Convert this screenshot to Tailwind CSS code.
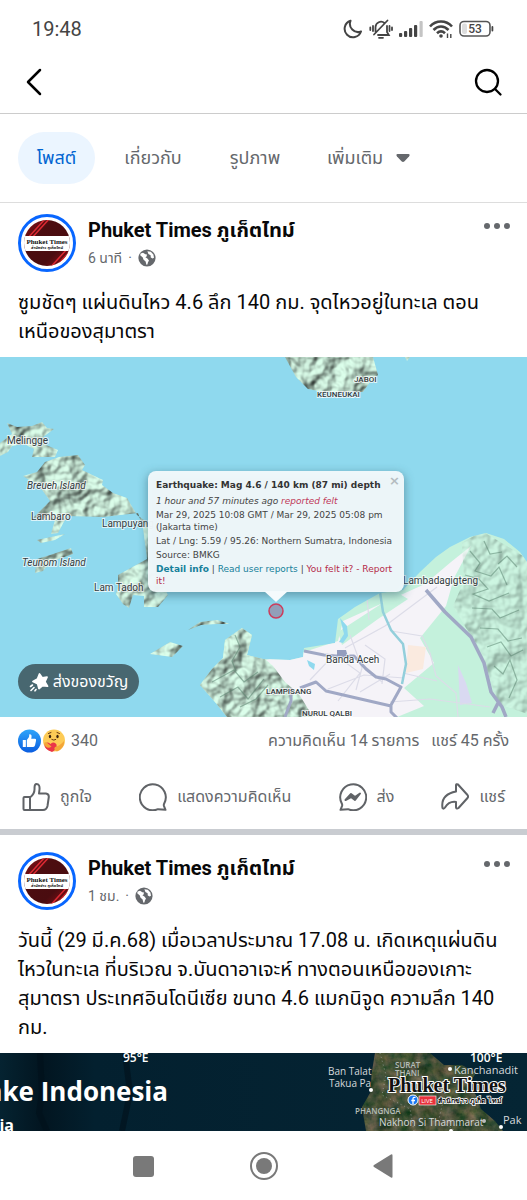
<!DOCTYPE html>
<html lang="th">
<head>
    <meta charset="UTF-8">
    <meta name="viewport" content="width=device-width, initial-scale=1.0">
    <title>Phuket Times ภูเก็ตไทม์</title>
    <script src="https://cdn.jsdelivr.net/npm/@tailwindcss/browser@4"></script>
</head>
<body class="bg-white text-[#080809] font-[Roboto,'Noto_Sans_Thai','Noto_Sans',sans-serif] overflow-x-hidden">

    <!-- Shared gradient and clip, kept rendered so the symbols can use them -->
    <svg class="absolute w-0 h-0">
        <clipPath id="avatarClip"><circle cx="29" cy="29" r="23"/></clipPath>
        <linearGradient id="maroon" x1="0" y1="0" x2="1" y2="1">
            <stop offset="0" stop-color="#b5121b"/>
            <stop offset=".35" stop-color="#4c0d10"/>
            <stop offset=".65" stop-color="#4a0c10"/>
            <stop offset="1" stop-color="#b5121b"/>
        </linearGradient>
    </svg>

    <!-- Shared symbols -->
    <svg class="hidden">
        <symbol id="globe" viewBox="0 0 18 18">
            <circle cx="9" cy="9" r="8.6" fill="#65686c"/>
            <path d="M2.600 4.600 5 3.800 7.400 5.200 9 5.600 8.600 7.400 7.400 8.200 9.400 9.600 11 11.400 10 13.200 9.400 15.600 8.400 15.800 7.600 12.400 5.400 10.600 4.800 8.400 2.200 6.200Z" fill="#fff"/>
            <path d="M9.400 2.200 12.800 2.800 15.400 5.600 16 8.800 14.600 9.400 12.800 8.400 12.600 6.200 10.400 5Z" fill="#fff"/>
        </symbol>
        <symbol id="avatar" viewBox="0 0 58 58">
            <circle cx="29" cy="29" r="27.5" fill="#fff" stroke="#0866ff" stroke-width="3"/>
            <g clip-path="url(#avatarClip)">
                <rect width="58" height="58" fill="url(#maroon)"/>
                <path d="M8 26 28 4M12 26 32 4M30 56 50 34M35 56 55 34" stroke="#dc2a33" stroke-width="1.5"/>
                <rect x="5" y="22" width="48" height="15" fill="#fff"/>
            </g>
            <text x="29" y="30" text-anchor="middle" font-family="Liberation Serif, serif" font-weight="700" font-size="7" fill="#111">Phuket Times</text>
            <text x="29" y="35" text-anchor="middle" font-weight="700" font-size="4" fill="#111">สำนักข่าว ภูเก็ตไทม์</text>
        </symbol>
        <symbol id="dots" viewBox="0 0 28 8">
            <circle cx="4" cy="4" r="3" fill="#65686c"/>
            <circle cx="14" cy="4" r="3" fill="#65686c"/>
            <circle cx="24" cy="4" r="3" fill="#65686c"/>
        </symbol>
    </svg>

    <!-- Status bar -->
    <div class="h-14 pt-0.5 pl-8 pr-8 flex items-center justify-between text-[#444]">
        <span class="text-xl">19:48</span>
        <div class="flex items-center gap-1.5">
            <svg class="w-5 h-5" viewBox="0 0 20 20" fill="none" stroke="#444" stroke-width="2" stroke-linejoin="round"><path d="M7.500 1.800A8.400 8.400 0 1 0 18 12.500 8.200 8.200 0 0 1 7.500 1.800Z"/></svg>
            <svg class="w-6 h-5" viewBox="0 0 24 20" fill="none" stroke="#444" stroke-width="1.8" stroke-linecap="round"><path d="M6.5 12.500V8a5.500 5.500 0 0 1 9-4M18 7v6l1.800 3H9M5 15.500 18.500 1.500M10 18.800h4M4 7v5M1.300 8.500v2.500M20.500 7v5M23 8.500v2.500"/></svg>
            <svg class="w-6 h-5" viewBox="0 0 24 20" fill="#444"><rect y="14" width="3.200" height="4" rx="1"/><rect x="5" y="12" width="3.200" height="6" rx="1"/><rect x="10" y="9" width="3.200" height="9" rx="1"/><rect x="15" y="6" width="3.200" height="12" rx="1"/><rect x="20.500" y="2" width="3.200" height="16" rx="1" fill="#c4c4c4"/></svg>
            <svg class="w-6 h-5" viewBox="0 0 24 20" fill="none" stroke="#444" stroke-width="2.600"><path d="M1 7.500C7 .8 17 .8 23 7.500M4.500 11c4.500-4.600 10.500-4.600 15 0M8 14.300c2.500-2.400 5.500-2.400 8 0"/><circle cx="12" cy="17" r="1.800" fill="#444" stroke="none"/><path d="M18.500 19v-4.500M21.800 15v4" stroke-width="1.400"/></svg>
            <svg class="w-9 h-5" viewBox="0 0 36 20"><rect x="1" y="2.500" width="30" height="14.500" rx="4" fill="none" stroke="#555" stroke-width="1.600"/><rect x="3" y="4.500" width="5" height="10.500" rx="2" fill="#ddd"/><rect x="32.500" y="7" width="1.800" height="5.500" rx="1" fill="#444"/><text x="16" y="14" text-anchor="middle" font-family="Roboto" font-weight="500" font-size="12" fill="#444">53</text></svg>
        </div>
    </div>

    <!-- Top bar -->
    <header class="h-[58px] px-6 pb-1.5 flex items-center justify-between border-b border-[#cccccc]">
        <button aria-label="ย้อนกลับ"><svg class="w-6 h-8" viewBox="0 0 24 32" fill="none" stroke="#000" stroke-width="2.500" stroke-linecap="round" stroke-linejoin="round"><path d="M16 4 4 16l12 12"/></svg></button>
        <button aria-label="ค้นหา"><svg class="w-8 h-8" viewBox="0 0 32 32" fill="none" stroke="#000" stroke-width="2.300" stroke-linecap="round"><circle cx="16" cy="15" r="11"/><path d="m24 23 5.500 5.500"/></svg></button>
    </header>

    <!-- Tabs -->
    <nav class="h-[89px] pl-[18px] flex items-center border-b border-[#dddddd] text-lg text-[#65686c]">
        <button class="h-[52px] w-[77px] rounded-full bg-[#ebf5ff] text-[#0064d1]">โพสต์</button>
        <button class="ml-3 w-[92px]">เกี่ยวกับ</button>
        <button class="ml-3 w-[88px]">รูปภาพ</button>
        <button class="ml-7 flex items-center gap-3">เพิ่มเติม <svg class="w-4 h-3" viewBox="0 0 16 12"><path d="M2.500 2h11q2 .5.500 2.500L9.500 9.300q-1.500 1.200-3 0L2 4.500Q.5 2.500 2.500 2Z" fill="#65686c"/></svg></button>
    </nav>

    <!-- Post 1 -->
    <article>
        <div class="px-[18px] pt-[11px] flex">
            <svg class="w-[58px] h-[58px]"><use href="#avatar"/></svg>
            <div class="ml-3 flex-1">
                <h2 class="text-xl leading-8 font-bold">Phuket Times ภูเก็ตไทม์</h2>
                <p class="flex items-center gap-1 text-sm leading-6 text-[#65686c]">6 นาที <span class="px-0.5">·</span> <svg class="w-[18px] h-[18px]"><use href="#globe"/></svg></p>
            </div>
            <button class="self-start pt-2 -mr-0.5" aria-label="ตัวเลือก"><svg class="w-7 h-2"><use href="#dots"/></svg></button>
        </div>
        <p class="px-[18px] pt-4 pb-[11px] text-xl leading-[29px] whitespace-nowrap">ซูมชัดๆ แผ่นดินไหว 4.6 ลึก 140 กม. จุดไหวอยู่ในทะเล ตอน<br>เหนือของสุมาตรา</p>

        <!-- Map -->
        <div class="relative overflow-hidden">
            <svg class="block w-full h-auto" viewBox="0 0 527 360">
                <defs>
                    <filter id="relief" x="0" y="0" width="100%" height="100%" color-interpolation-filters="sRGB">
                        <feTurbulence type="fractalNoise" baseFrequency=".05" numOctaves="3" seed="7" result="n"/>
                        <feDiffuseLighting in="n" surfaceScale="6" diffuseConstant="1.100" lighting-color="#c8e8d6" result="l"><feDistantLight azimuth="225" elevation="58"/></feDiffuseLighting>
                        <feComposite in="l" in2="SourceAlpha" operator="in"/>
                    </filter>
                    <filter id="soft"><feGaussianBlur stdDeviation="5"/></filter>
                    <clipPath id="main"><path id="coast" d="M227 360 215 345 200 328 212 312 223 301 225 283 242 271 252 278 247 298 263 302 290 303 303 300 304 291 335 286 338 262 355 250 380 236 403 233 420 215 436 200 450 190 470 180 486 176 504 182 520 195 527 205V360Z"/></clipPath>
                </defs>
                <rect width="527" height="360" fill="#8fd9ee"/>

                <!-- Islands -->
                <g filter="url(#relief)">
                    <path d="m7 66 10 4 15-1 10-4 5 6 7 1-11 8 3 8 12 5-3 7-23 0 2-8-10-5-12 2-4 6-8 4V86l12-9Z"/>
                    <path d="m45 105 14-5 19-2 7 10-3 5 21 10-1 5 11 8 14 5 10 17 11 8v34l20 38-10 12-14 0 0-11-11-1-4 13-6-4-7-10 2-7 0-12 29-16-4-31-5-15-35 4-36-1-9 17-7 1 4-14-22-2 17-17-10-14-17-11 14-4Z"/>
                    <path d="m37 183 28-6-10 6-14 3ZM35 216l2-14 13-4 21-7 2 6-23 8-7 9Z"/>
                    <path d="m188 273 12-8 17-2 13 4-13 0-16 1ZM150 297l20-12 13 4-11 11Z"/>
                    <path d="M285 0l11 20 12 12 15 3 40 0 7-10 8-7-5-18ZM405 0h5l-3 4Z"/>
                </g>

                <!-- Mainland -->
                <use href="#coast" fill="#c4f1dc"/>
                <g clip-path="url(#main)">
                    <path d="m265 303 39-8 34-11 5-20 82-37 26-22 20-16-17 32-8 28-26 32 14 25-30 25 20 18-44 18-80-7-30-37Z" fill="#f5f3f8"/>
                    <path d="m338 275 60-39 10 6-30 20-36 26Z" fill="#c4f1dc"/>
                    <path d="m408 288 18 2-3 22-17 4Z" fill="#faeadf"/>
                    <path d="m458 308 8 18 6 20-12 2Z" fill="#d9d9f1"/>
                    <path d="M195 268h60l0 25 18 16 12 16 14 12 14 23H215l-20-30Z" filter="url(#relief)"/>
                    <path d="m462 186 20-12 46 28v155l-30-10-18-55-14-21-13-22 11-25Z" filter="url(#relief)" opacity=".4"/>
                    <g fill="none" stroke="#55806c" stroke-width="1.200" opacity=".5">
                        <path d="m470 194 10 12-5 8 16 5 8-9 8 18M465 218l14 4 9 10-15 5 16 7 20-8M472 251l20 1 8 9 19-8M480 271l18 1 10 12 14-3M487 290l14-5 10 14 12-6M494 309l9 8 7-14 7 20-8 18M498 207l9-8 10 11M484 184l6 13 12-2"/>
                        <path d="m235 278 5 12-8 14 4 10M212 325l22-12 10 12 14-10M220 340l18-10 10 12 16-20M240 350l16-8 12-14"/>
                    </g>
                    <g fill="none" stroke="#dcdce8" stroke-width="1.200">
                        <path d="m367 241 2 22M345 291l40-22 52-39M310 323l18-19 26-5 28 26M350 278l12 33-6 22M338 300l22 16-22 28M391 274l31 5 8 17 6 23 20 17 2 24M365 288l20 14-3 25M390 317l-30 18M403 316l34 8M328 332l36-14 40 3M390 345l40-3 60 8"/>
                    </g>
                    <path d="m380 235 3 20 8 18 12 14 3 20-4 20" fill="none" stroke="#93cfdb" stroke-width="2.500"/>
                    <g fill="none" stroke="#a0a8c5" stroke-width="3" stroke-linejoin="round">
                        <path d="m304 294 20 4 12 1 18 0 12 13 10 8 10 2 15 8-10 18v7l8 8M300 331l16-6 10 9 65 15M291 331l0 13-6 16"/>
                        <path d="m426 233 19 22 26 25 13 26 7 29 11 15 4 10M499 344l-6 12" stroke-width="3.500"/>
                    </g>
                    <path d="m337 293 9 0 2 7-11 1Z" fill="#949dbe"/>
                </g>
                <path d="m340 261 7 8 1 10-5 7-4-1 5-8ZM307 303l8 4-1 6-5-4Z" fill="#8fd9ee"/>

                <!-- Place names -->
                <g font-family="Roboto, sans-serif" font-size="10" fill="#333b40" stroke="#fff" stroke-opacity=".7" stroke-width="2" paint-order="stroke">
                    <text x="7" y="87">Melingge</text>
                    <text x="27" y="132" font-style="italic">Breueh Island</text>
                    <text x="31" y="163">Lambaro</text>
                    <text x="102" y="170">Lampuyang</text>
                    <text x="22" y="209" font-style="italic">Teunom Island</text>
                    <text x="94" y="234">Lam Tadoh</text>
                    <text x="403" y="227">Lambadagigteng</text>
                    <text x="326" y="306">Banda Aceh</text>
                    <g font-size="8" font-weight="500">
                        <text x="354" y="25">JABOI</text>
                        <text x="317" y="40">KEUNEUKAI</text>
                        <text x="266" y="337">LAMPISANG</text>
                        <text x="302" y="359">NURUL QALBI</text>
                    </g>
                </g>

                <!-- Epicentre -->
                <rect x="147" y="116" width="258" height="123" rx="8" fill="#35606e" opacity=".5" filter="url(#soft)"/>
                <path d="m264 234 12 11 12-11Z" fill="#f5fafc"/>
                <circle cx="276" cy="254" r="7" fill="#929fb9" stroke="#cc3d5c" stroke-width="1.500"/>
            </svg>

            <div class="absolute left-[148px] top-[114px] w-[256px] h-[121px] rounded-lg bg-[#f3fafc]/95 px-2 pt-2 font-['DejaVu_Sans',sans-serif] text-[9px] leading-[12px] text-[#444] whitespace-nowrap">
                <p class="font-bold text-[#333]">Earthquake: Mag 4.6 / 140 km (87 mi) depth</p>
                <p class="mt-1 italic">1 hour and 57 minutes ago <span class="text-[#c0395a]">reported felt</span></p>
                <p class="mt-[2px]">Mar 29, 2025 10:08 GMT / Mar 29, 2025 05:08 pm<br>(Jakarta time)</p>
                <p class="mt-[2px]">Lat / Lng: 5.59 / 95.26: Northern Sumatra, Indonesia</p>
                <p class="mt-[2px]">Source: BMKG</p>
                <p class="mt-[2px]"><a href="#" class="font-bold text-[#16809a]">Detail info</a> | <a href="#" class="text-[#16809a]">Read user reports</a> | <a href="#" class="text-[#b52a48]">You felt it? - Report<br>it!</a></p>
                <button class="absolute right-1 top-1 text-[13px] font-bold text-[#b4bcc0]" aria-label="Close">×</button>
            </div>

            <button class="absolute left-[18px] bottom-[18px] h-[35px] w-[121px] rounded-full bg-[#486770] text-white flex items-center justify-center gap-1 text-base">
                <svg class="w-5 h-5" viewBox="0 0 20 20" fill="#fff" stroke="#fff" stroke-linejoin="round" stroke-linecap="round"><path d="m10.500 2 2.800 4 4.700-.8-2.200 4.600 2.700 4.400-5-.7-3.500 3-1.300-4.700L4 9.500l4.500-2.400Z" stroke-width="1.800"/><path d="m1.500 14.500 2-1.500M2 18.500l3-3M6 18.800l1-1.300" stroke-width="1.600"/></svg>
                ส่งของขวัญ
            </button>
        </div>

        <!-- Reactions -->
        <div class="h-12 px-[18px] flex items-center text-base text-[#65686c]">
            <svg class="w-[23px] h-6" viewBox="0 0 24 24">
                <linearGradient id="like" x2="0" y2="1"><stop stop-color="#2fa5fa"/><stop offset="1" stop-color="#0a5de0"/></linearGradient>
                <circle cx="12" cy="12" r="12" fill="url(#like)"/>
                <path d="M5 11h3.200v7.200H5ZM9.200 11l2.300-3.300.3-2.700q2.800-.4 2.300 3.200l-.3 1.500h4q1.500.3 1 2l-1 4.800q-.4 1.700-2 1.700H9.200Z" fill="#fff"/>
            </svg>
            <svg class="ml-[2px] w-[22px] h-6" viewBox="0 0 22 24">
                <circle cx="11" cy="11.500" r="11" fill="#fdcb56"/>
                <path d="M5.500 4.500 8 3.500M14 3.500l2.500 1" stroke="#6b3a10" stroke-linecap="round"/>
                <ellipse cx="7" cy="7.500" rx="1.200" ry="1.800" fill="#3b2210"/><ellipse cx="14.500" cy="7.500" rx="1.200" ry="1.800" fill="#3b2210"/>
                <path d="M8.500 10.300q2.300 1.600 4.600 0" fill="none" stroke="#6b3a10" stroke-width="1"/>
                <path d="M9 23Q1 20 1.500 15.500 3.500 12 7.500 15q3.500-3 6 .5Q14.500 20 9 23Z" fill="#ea3548"/>
                <path d="M1 14q2-2 4.500 1l3 2.500q-3 2.500-6 0ZM21 12q1 7-7 10.500-4-2-2-4.500 5-1 9-6Z" fill="#f4a637"/>
            </svg>
            <span class="ml-1.5 flex-1">340</span>
            <a href="#">ความคิดเห็น 14 รายการ</a>
            <a href="#" class="ml-3">แชร์ 45 ครั้ง</a>
        </div>
        <div class="h-16 px-[22px] flex items-center justify-between text-base text-[#65686c]">
            <button class="flex items-center gap-2.5"><svg class="w-7 h-7" viewBox="0 0 28 28" fill="none" stroke="#606367" stroke-width="2" stroke-linejoin="round"><path d="M1.500 15q0-1 1-1H8v13H2.500q-1 0-1-1ZM8 14.500q5-3.500 4.500-9.500Q12.500 1 14.500 1q3.500 0 3 5.500L17 10.500h7q3 .3 2.800 3.500L25.500 23q-1 4-4.500 4H8"/></svg>ถูกใจ</button>
            <button class="flex items-center gap-2.5"><svg class="w-7 h-7" viewBox="0 0 28 28" fill="none" stroke="#606367" stroke-width="2" stroke-linejoin="round"><path d="M25.200 20.500A13 13 0 1 0 19 26.200l7.500.6-1.500-3.600q-.5-1.300.2-2.700Z"/></svg>แสดงความคิดเห็น</button>
            <button class="flex items-center gap-2.5"><svg class="w-7 h-7" viewBox="0 0 28 28" fill="none" stroke="#606367" stroke-width="2" stroke-linejoin="round"><path d="M2.800 20.500A13 13 0 1 1 9 26.200l-7.500.6L3 23.200q.5-1.300-.2-2.700Z"/><path d="m6.500 17 5.500-6 4 3 5-3.500-5 6.500-4-3Z" fill="#606367"/></svg>ส่ง</button>
            <button class="flex items-center gap-2.5"><svg class="w-7 h-7" viewBox="0 0 28 28" fill="none" stroke="#606367" stroke-width="2" stroke-linejoin="round"><path d="M15 2.500q0-2 2-1L26.500 12q1.200 1.500 0 3L17.500 25q-2 1.500-2.500-.8V19q-7-1-11 5.500-1.500 2-2.500.5Q-.5 11.500 15 8.500Z"/></svg>แชร์</button>
        </div>
    </article>

    <div class="h-1.5 bg-[#c9ccd1]"></div>

    <!-- Post 2 -->
    <article>
        <div class="px-[18px] pt-[17px] flex">
            <svg class="w-[58px] h-[58px]"><use href="#avatar"/></svg>
            <div class="ml-3 flex-1">
                <h2 class="text-xl leading-8 font-bold">Phuket Times ภูเก็ตไทม์</h2>
                <p class="flex items-center gap-1 text-sm leading-6 text-[#65686c]">1 ชม. <span class="px-0.5">·</span> <svg class="w-[18px] h-[18px]"><use href="#globe"/></svg></p>
            </div>
            <button class="self-start pt-2 -mr-0.5" aria-label="ตัวเลือก"><svg class="w-7 h-2"><use href="#dots"/></svg></button>
        </div>
        <p class="px-[18px] pt-4 pb-[11px] text-xl leading-[29px] whitespace-nowrap">วันนี้ (29 มี.ค.68) เมื่อเวลาประมาณ 17.08 น. เกิดเหตุแผ่นดิน<br>ไหวในทะเล ที่บริเวณ จ.บันดาอาเจะห์ ทางตอนเหนือของเกาะ<br>สุมาตรา ประเทศอินโดนีเซีย ขนาด 4.6 แมกนิจูด ความลึก 140<br>กม.</p>
        <svg class="block w-full h-auto" viewBox="0 0 527 78" font-family="Open Sans, sans-serif" fill="#fff">
            <defs>
                <linearGradient id="ocean"><stop stop-color="#052331"/><stop offset=".08" stop-color="#021520"/><stop offset=".18" stop-color="#03202f"/><stop offset="1" stop-color="#052534"/></linearGradient>
                <filter id="ground" x="0" y="0" width="100%" height="100%" color-interpolation-filters="sRGB">
                    <feTurbulence type="fractalNoise" baseFrequency=".09" numOctaves="4" seed="3"/>
                    <feColorMatrix values=".6 0 0 0 -.02  .3 .1 0 0 .12  .3 0 .1 0 .02  0 0 0 0 1"/>
                    <feComposite in2="SourceAlpha" operator="in"/>
                </filter>
            </defs>
            <rect width="527" height="78" fill="url(#ocean)"/>
            <path d="m40 0 2 40-3 20 8 18M125 0l5 40-8 38" stroke="#01101a" stroke-width="6" fill="none" opacity=".6"/>
            <path d="M375 0l-3 18-2 22-8 14 4 24H503l-8-10-14-12-5-14-8-10 8-12-14-8-18 0-14-12Z" filter="url(#ground)"/>
            <path d="m380 0 6 22-4 20 28 14 4 22M445 40l-6 26 16 12" stroke="#aaa" stroke-dasharray="1 3" fill="none" opacity=".7"/>
            <text x="123" y="9" font-size="12" font-weight="600">95°E</text>
            <text x="470" y="9" font-size="12" font-weight="600">100°E</text>
            <text x="168" y="48" text-anchor="end" font-size="26" font-weight="700">ake Indonesia</text>
            <text x="14" y="78" text-anchor="end" font-size="16" font-weight="700">ia</text>
            <g font-size="10" fill="#d5d9dc">
                <text x="328" y="22">Ban Talat</text>
                <text x="329" y="34">Takua Pa</text>
                <text x="454" y="21" font-size="11">Kanchanadit</text>
                <text x="379" y="73">Nakhon Si Thammarat</text>
                <text x="503" y="71" font-size="11">Pak</text>
                <g font-size="8" font-weight="600" fill="#b4bcb8">
                    <text x="395" y="15">SURAT</text>
                    <text x="395" y="23">THANI</text>
                    <text x="355" y="61">PHANGNGA</text>
                </g>
            </g>
            <circle cx="371" cy="37" r="2"/><circle cx="450" cy="16" r="2"/><circle cx="501" cy="74" r="2"/><circle cx="451" cy="78" r="2"/><circle cx="484" cy="68" r="2" fill="#bbb"/>
            <text x="388" y="39" font-family="Liberation Serif, serif" font-weight="700" font-size="20" fill="#111" stroke="#fff" stroke-width="2" paint-order="stroke">Phuket Times</text>
            <circle cx="413" cy="47" r="5" fill="#1877f2" stroke="#fff"/>
            <path d="M415.500 44.500q-2.500-.8-2.500 1.500v5M411.300 47.500h3.700" stroke="#fff" stroke-width="1.300" fill="none"/>
            <rect x="419" y="43" width="17" height="9" fill="#e8323c" stroke="#fff" stroke-width=".6"/>
            <text x="427" y="50" text-anchor="middle" font-size="6">LIVE</text>
            <text x="438" y="50" font-size="7" font-weight="700" fill="#111" stroke="#fff" stroke-width="1.500" paint-order="stroke">สำนักข่าว ภูเก็ต ไทม์</text>
        </svg>
    </article>

    <!-- System navigation -->
    <div class="h-[69px] px-[129px] flex items-center justify-between">
        <button aria-label="Recents"><svg class="w-7 h-7" viewBox="0 0 28 28"><rect x="4" y="4" width="21" height="21" rx="3" fill="#797979"/></svg></button>
        <button aria-label="Home"><svg class="w-7 h-7" viewBox="0 0 28 28"><circle cx="14" cy="14" r="13" fill="none" stroke="#797979" stroke-width="2"/><circle cx="14" cy="14" r="8" fill="#797979"/></svg></button>
        <button aria-label="Back"><svg class="w-7 h-7" viewBox="0 0 28 28"><path d="M4 13q-1.500 1 0 2l17 10.500q1.500.8 1.500-1V3.500q0-1.800-1.500-1Z" fill="#797979"/></svg></button>
    </div>
</body>
</html>
